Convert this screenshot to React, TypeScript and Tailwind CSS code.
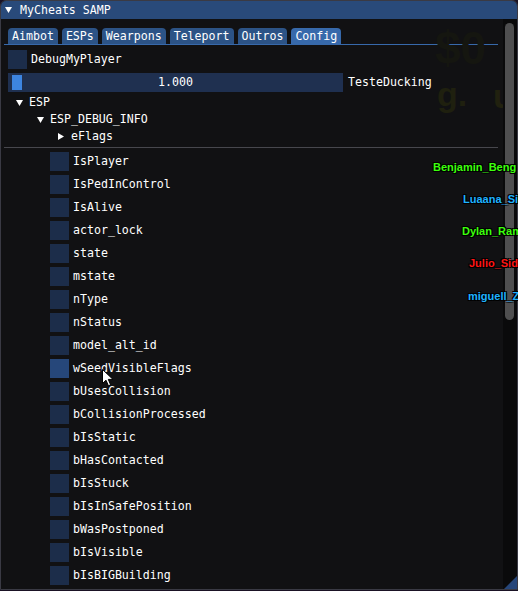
import React from "react";

const mono = "font-['DejaVu_Sans_Mono','Liberation_Mono',monospace] text-[11.6px] leading-[13px] text-white";

const tabs = ["Aimbot", "ESPs", "Wearpons", "Teleport", "Outros", "Config"];

const flags = [
  "IsPlayer",
  "IsPedInControl",
  "IsAlive",
  "actor_lock",
  "state",
  "mstate",
  "nType",
  "nStatus",
  "model_alt_id",
  "wSeedVisibleFlags",
  "bUsesCollision",
  "bCollisionProcessed",
  "bIsStatic",
  "bHasContacted",
  "bIsStuck",
  "bIsInSafePosition",
  "bWasPostponed",
  "bIsVisible",
  "bIsBIGBuilding",
  "bPedPhysics",
];

const names = [
  { name: "Benjamin_Beng", x: "left-[433px]", y: "top-[160px]", c: "text-[#3cff0c]" },
  { name: "Luaana_Si", x: "left-[463px]", y: "top-[192px]", c: "text-[#1fb2ff]" },
  { name: "Dylan_Ram", x: "left-[462px]", y: "top-[224px]", c: "text-[#3cff0c]" },
  { name: "Julio_Sid", x: "left-[469px]", y: "top-[256px]", c: "text-[#ff1414]" },
  { name: "miguell_Z", x: "left-[468px]", y: "top-[289px]", c: "text-[#1fb2ff]" },
];

function ArrowDown() {
  return (
    <svg width="7" height="6" viewBox="0 0 7 6" className="shrink-0">
      <polygon points="0,0 7,0 3.5,6" fill="#fff" />
    </svg>
  );
}

function ArrowRight() {
  return (
    <svg width="6" height="7" viewBox="0 0 6 7" className="shrink-0">
      <polygon points="0,0 6,3.5 0,7" fill="#fff" />
    </svg>
  );
}

function Checkbox({ label, hovered }: { label: string; hovered?: boolean }) {
  return (
    <div className="flex h-[19px] items-center gap-[4px]">
      <div className={`h-[19px] w-[19px] shrink-0 ${hovered ? "bg-[#26477a]" : "bg-[#1c2d4a]"}`} />
      <span className={mono}>{label}</span>
    </div>
  );
}

function TreeRow({ indent, open, label }: { indent: string; open: boolean; label: string }) {
  return (
    <div className={`mt-[4px] flex h-[13px] items-center ${indent}`}>
      <div className="flex w-[21px] shrink-0 items-center pl-[8px]">
        {open ? <ArrowDown /> : <ArrowRight />}
      </div>
      <span className={mono}>{label}</span>
    </div>
  );
}

export default function App() {
  return (
    <div className="relative h-[591px] w-[518px] overflow-hidden bg-[#1a1224]">
      <div className="relative flex h-[590px] w-[518px] flex-col overflow-hidden rounded-t-[6px] border border-[#3a3a44] bg-[#111113]">
        {/* title bar */}
        <div className="flex h-[18px] shrink-0 items-center bg-[#294a7a] pl-[4px]">
          <ArrowDown />
          <span className={`${mono} ml-[8px]`}>MyCheats SAMP</span>
        </div>

        <div className="flex min-h-0 flex-1">
          {/* content */}
          <div className="relative min-w-0 flex-1 overflow-hidden pl-[7px] pr-[5px] pt-[9px]">
            {/* faint game background */}
            <div className="pointer-events-none absolute left-[434px] top-[6px] font-['Liberation_Sans',sans-serif] text-[46px] font-bold leading-[46px] text-[#151610]">
              $0
            </div>
            <div className="pointer-events-none absolute left-[436px] top-[58px] font-['Liberation_Sans',sans-serif] text-[34px] font-bold leading-[34px] text-[#1f200f]">
              g.
            </div>
            <div className="pointer-events-none absolute left-[492px] top-[60px] font-['Liberation_Sans',sans-serif] text-[34px] font-bold leading-[34px] text-[#21210f]">
              u
            </div>

            {/* tabs */}
            <div className="relative flex gap-[4px]">
              {tabs.map((t) => (
                <div
                  key={t}
                  className={`flex h-[16px] items-center rounded-t-[4px] px-[4px] ${
                    t === "Config" ? "bg-[#3769ab]" : "bg-[#2c5386]"
                  }`}
                >
                  <span className={mono}>{t}</span>
                </div>
              ))}
            </div>
            <div className="-ml-[4px] h-px bg-[#3769ab]" />

            <div className="relative mt-[5px]">
              <Checkbox label="DebugMyPlayer" />
            </div>

            {/* slider */}
            <div className="relative mt-[4px] flex h-[19px] items-center">
              <div className="relative flex h-[19px] w-[335px] items-center justify-center bg-[#1f3050]">
                <div className="absolute left-[4px] top-[2px] h-[15px] w-[10px] bg-[#3d85e0]" />
                <span className={mono}>1.000</span>
              </div>
              <span className={`${mono} ml-[5px]`}>TesteDucking</span>
            </div>

            <TreeRow indent="" open label="ESP" />
            <TreeRow indent="pl-[21px]" open label="ESP_DEBUG_INFO" />
            <TreeRow indent="pl-[42px]" open={false} label="eFlags" />

            <div className="-ml-[4px] mt-[4px] h-px bg-[#47474d]" />

            <div className="mt-[4px] flex flex-col gap-[4px] pl-[42px]">
              {flags.map((f) => (
                <Checkbox key={f} label={f} hovered={f === "wSeedVisibleFlags"} />
              ))}
            </div>
          </div>

          {/* scrollbar */}
          <div className="w-[14px] shrink-0 bg-[#0a0a0b] pl-[2px] pt-[4px]">
            <div className="h-[297px] w-[9px] rounded-full bg-[#4f4f50]" />
          </div>
        </div>

        {/* resize grip */}
        <svg className="absolute bottom-0 right-0" width="13" height="13" viewBox="0 0 13 13">
          <polygon points="13,0 13,13 0,13" fill="#26467a" />
        </svg>
      </div>

      {/* nametags drawn over */}
      {names.map((n) => (
        <div
          key={n.name}
          className={`absolute ${n.x} ${n.y} whitespace-nowrap font-['Liberation_Sans',sans-serif] text-[11px] font-bold leading-[14px] ${n.c} [text-shadow:1px_1px_0_#000,-1px_-1px_0_#000,1px_-1px_0_#000,-1px_1px_0_#000]`}
        >
          {n.name}
        </div>
      ))}

      {/* mouse cursor */}
      <svg className="absolute left-[102px] top-[369px]" width="12" height="18" viewBox="0 0 12 18">
        <path d="M0.5 0.5 L0.5 14.5 L4 11.2 L6.4 16.8 L8.6 15.8 L6.3 10.4 L11 10.4 Z" fill="#fff" stroke="#000" strokeWidth="1" />
      </svg>
    </div>
  );
}
